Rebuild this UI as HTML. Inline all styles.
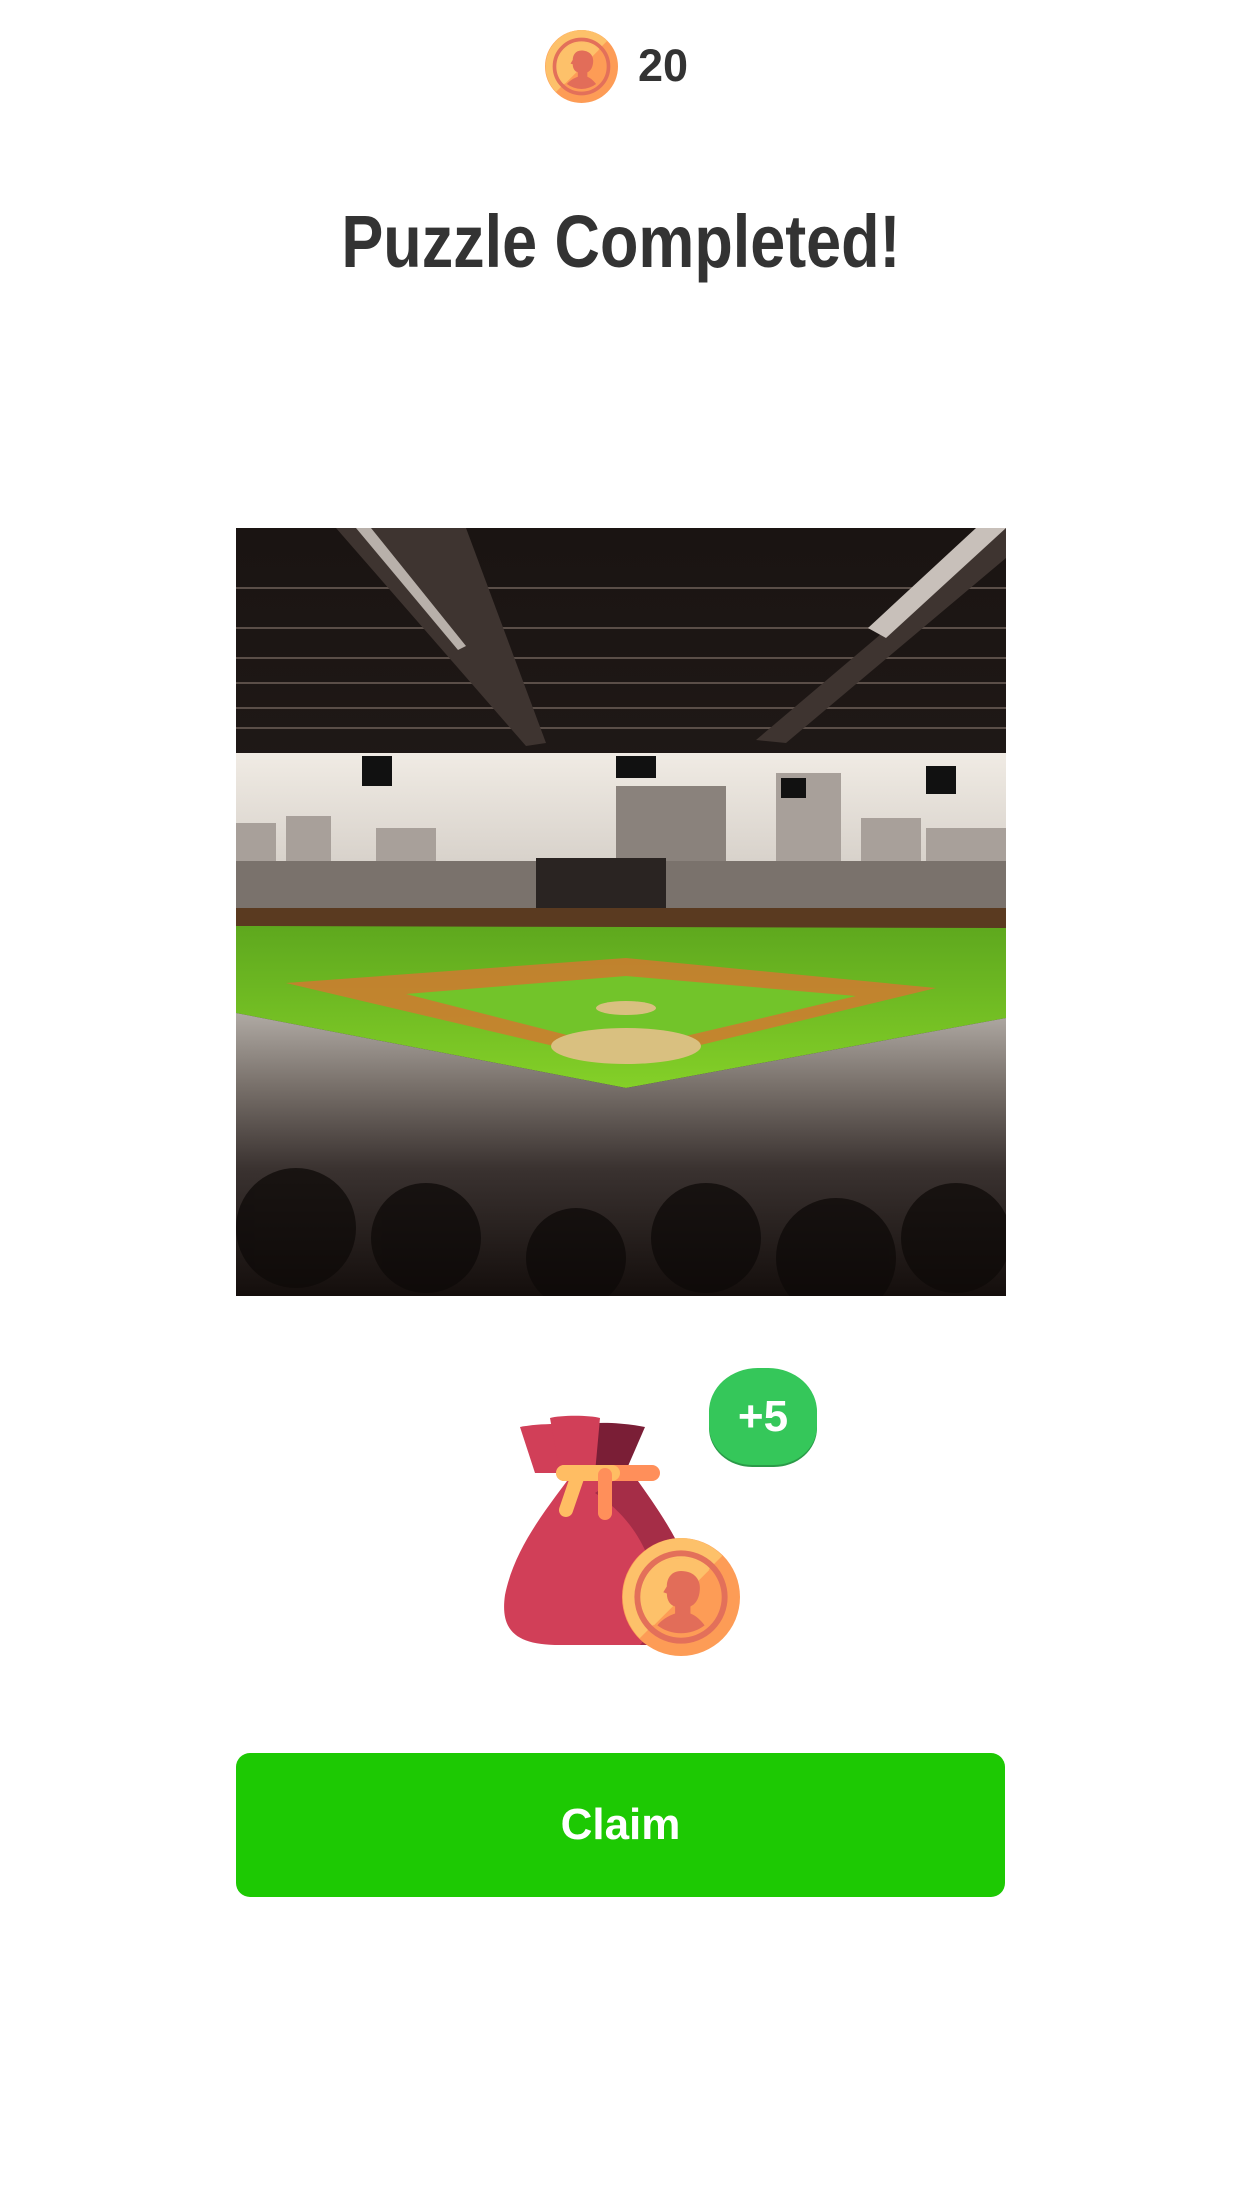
<!DOCTYPE html>
<html><head><meta charset="utf-8">
<style>
html,body{margin:0;padding:0;background:#fff;}
body{width:1242px;height:2208px;position:relative;overflow:hidden;font-family:"Liberation Sans",Arial,sans-serif;}
.abs{position:absolute;}
.num{left:638px;top:40px;font-size:45px;font-weight:bold;color:#333;line-height:52px;}
.title{left:0;width:1242px;top:192px;text-align:center;font-size:74px;font-weight:bold;color:#333;line-height:100px;}
.title span{display:inline-block;transform:scaleX(0.85);transform-origin:center;}
.btn{left:236px;top:1753px;width:769px;height:144px;background:#1dc903;border-radius:14px;color:#fff;font-weight:bold;font-size:44px;text-align:center;line-height:144px;}
.badge{left:709px;top:1368px;width:108px;height:97px;background:#35c75a;border-radius:45% 45% 40% 40%/45% 45% 40% 40%;color:#fff;font-weight:bold;font-size:44px;text-align:center;line-height:97px;box-shadow:0 2px 0 #2a9a48;}
</style></head><body>

<svg class="abs" style="left:545px;top:30px" width="73" height="73" viewBox="0 0 100 100">
<circle cx="50" cy="50" r="50" fill="#fd9c56"/>
<path d="M50 0 A50 50 0 0 0 15 85 L85 15 A50 50 0 0 0 50 0Z" fill="#fdc16a"/>
<circle cx="50" cy="50" r="37" fill="none" stroke="#e3705a" stroke-width="5"/>
<circle cx="50" cy="50" r="33" fill="#fd9c56"/>
<path d="M50 17 A33 33 0 0 0 27 74 L74 27 A33 33 0 0 0 50 17Z" fill="#fdc16a"/>
<path d="M50 28c-8 0-12 6-12 13l-3 5 3 1c0 6 3 10 7 11v6c-6 2-12 6-15 10a33 33 0 0 0 40 0c-3-4-7-8-12-10v-6c5-2 8-8 8-16 0-8-6-14-16-14z" fill="#e26d59"/>
</svg>
<div class="abs num">20</div>

<div class="abs title"><span>Puzzle Completed!</span></div>

<svg class="abs" style="left:236px;top:528px" width="770" height="768" viewBox="0 0 770 768" preserveAspectRatio="none">
<defs>
<linearGradient id="roof" x1="0" y1="0" x2="0" y2="1"><stop offset="0" stop-color="#1a1412"/><stop offset="1" stop-color="#2a2220"/></linearGradient>
<linearGradient id="sky" x1="0" y1="0" x2="0" y2="1"><stop offset="0" stop-color="#f0ebe4"/><stop offset="1" stop-color="#d8d2cb"/></linearGradient>
<linearGradient id="crowd" x1="0" y1="0" x2="0" y2="1"><stop offset="0" stop-color="#b0aaa4"/><stop offset="0.25" stop-color="#7a726c"/><stop offset="0.55" stop-color="#3a3230"/><stop offset="1" stop-color="#140e0c"/></linearGradient>
<linearGradient id="field" x1="0" y1="0" x2="0" y2="1"><stop offset="0" stop-color="#5ea81e"/><stop offset="1" stop-color="#84d028"/></linearGradient>
</defs>
<rect width="770" height="768" fill="url(#roof)"/>
<g stroke="#5a4e48" stroke-width="2">
<line x1="0" y1="60" x2="770" y2="60"/><line x1="0" y1="100" x2="770" y2="100"/><line x1="0" y1="130" x2="770" y2="130"/><line x1="0" y1="155" x2="770" y2="155"/><line x1="0" y1="180" x2="770" y2="180"/><line x1="0" y1="200" x2="770" y2="200"/>
</g>
<path d="M100 0 L230 0 L310 215 L290 218Z" fill="#3e3430"/>
<path d="M120 0 L135 0 L230 118 L222 122Z" fill="#b8b0aa"/>
<path d="M770 0 L770 30 L550 215 L520 212Z" fill="#3e3430"/>
<path d="M740 0 L770 0 L650 110 L632 100Z" fill="#c8c0ba"/>
<rect x="0" y="225" width="770" height="108" fill="url(#sky)"/>
<g fill="#a8a09a"><rect x="0" y="295" width="40" height="40"/><rect x="50" y="288" width="45" height="47"/><rect x="140" y="300" width="60" height="35"/><rect x="380" y="258" width="110" height="77" fill="#8a827c"/><rect x="540" y="245" width="65" height="90"/><rect x="625" y="290" width="60" height="45"/><rect x="690" y="300" width="80" height="35"/></g>
<g fill="#111"><rect x="126" y="228" width="30" height="30"/><rect x="380" y="228" width="40" height="22"/><rect x="690" y="238" width="30" height="28"/><rect x="545" y="250" width="25" height="20"/></g>
<rect x="0" y="333" width="770" height="50" fill="#7a726c"/>
<rect x="300" y="330" width="130" height="50" fill="#2a2422"/>
<rect x="0" y="380" width="770" height="20" fill="#5a3a20"/>
<path d="M0 398 L770 400 L770 490 L390 560 L0 485Z" fill="url(#field)"/>
<path d="M50 455 L390 430 L700 460 L390 535Z" fill="#d07a30" opacity="0.85"/>
<path d="M170 466 L390 448 L620 468 L390 522Z" fill="#72c42a"/>
<ellipse cx="390" cy="480" rx="30" ry="7" fill="#d9c080"/>
<ellipse cx="390" cy="518" rx="75" ry="18" fill="#d9c080"/>
<path d="M0 485 L390 560 L770 490 L770 768 L0 768Z" fill="url(#crowd)"/>
<g fill="#0e0a08" opacity="0.75">
<circle cx="60" cy="700" r="60"/><circle cx="190" cy="710" r="55"/><circle cx="340" cy="730" r="50"/><circle cx="470" cy="710" r="55"/><circle cx="600" cy="730" r="60"/><circle cx="720" cy="710" r="55"/>
</g>
</svg>

<svg class="abs" style="left:500px;top:1415px" width="210" height="232" viewBox="0 0 210 232">
<path d="M75 55 L130 55 C155 90 185 130 198 180 C205 215 190 230 150 230 L60 230 C15 230 0 215 5 180 C15 130 50 90 75 55Z" fill="#d13f58"/>
<path d="M130 55 C155 90 185 130 198 180 C205 215 190 230 150 230 L140 230 C170 200 160 120 95 78Z" fill="#a52d47"/>
<path d="M20 12 C40 8 70 8 95 12 L85 58 L35 58Z" fill="#d13f58"/>
<path d="M75 10 C100 6 125 8 145 12 L125 58 L85 58Z" fill="#7a1e36"/>
<path d="M50 3 C60 0 90 0 100 3 L95 58 L60 58Z" fill="#d13f58"/>
<rect x="56" y="50" width="104" height="16" rx="8" fill="#ff8f5a"/>
<rect x="56" y="50" width="64" height="16" rx="8" fill="#ffbd63"/>
<path d="M78 60 L66 95" stroke="#ffbd63" stroke-width="14" stroke-linecap="round"/>
<path d="M105 60 L105 98" stroke="#ff8f5a" stroke-width="14" stroke-linecap="round"/>
</svg>

<svg class="abs" style="left:622px;top:1538px" width="118" height="118" viewBox="0 0 100 100">
<circle cx="50" cy="50" r="50" fill="#fd9c56"/>
<path d="M50 0 A50 50 0 0 0 15 85 L85 15 A50 50 0 0 0 50 0Z" fill="#fdc16a"/>
<circle cx="50" cy="50" r="37" fill="none" stroke="#e3705a" stroke-width="5"/>
<circle cx="50" cy="50" r="33" fill="#fd9c56"/>
<path d="M50 17 A33 33 0 0 0 27 74 L74 27 A33 33 0 0 0 50 17Z" fill="#fdc16a"/>
<path d="M50 28c-8 0-12 6-12 13l-3 5 3 1c0 6 3 10 7 11v6c-6 2-12 6-15 10a33 33 0 0 0 40 0c-3-4-7-8-12-10v-6c5-2 8-8 8-16 0-8-6-14-16-14z" fill="#e26d59"/>
</svg>

<div class="abs badge">+5</div>

<div class="abs btn">Claim</div>
</body></html>
